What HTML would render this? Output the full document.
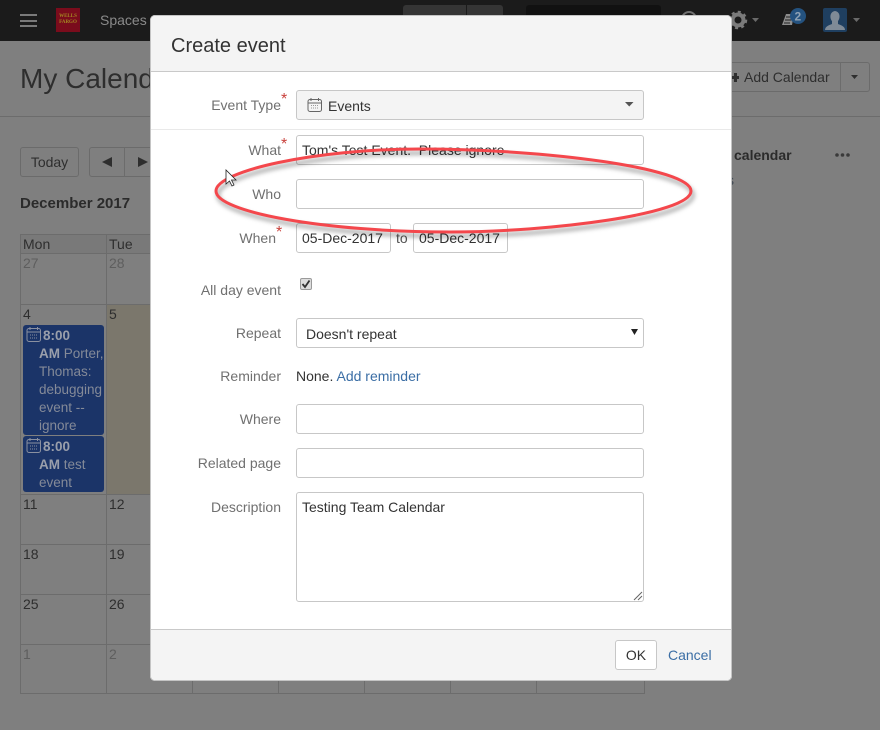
<!DOCTYPE html>
<html><head><meta charset="utf-8"><style>
html,body{margin:0;padding:0}
body{width:880px;height:730px;overflow:hidden;position:relative;background:#7f7f7f;font-family:"Liberation Sans",sans-serif;font-size:14px;color:#333}
.a{position:absolute;white-space:nowrap}
.nav{left:0;top:0;width:880px;height:41px;background:#1b1b1b}
.bar{left:20px;width:17px;height:2px;background:#7a7a7a}
.btn{border:1px solid #6b6b6b;border-radius:3px;box-sizing:border-box}
.l{background:#6c6c6c}
.n{font-size:14px;color:#2e2e2e;line-height:16px}
.g{color:#5e5e5e}
.ev{left:23px;width:81px;background:#1b3468;border-radius:3px;color:#848a98;font-size:13.500px;line-height:18px}
.ev b{color:#9a9fab}
.modal{left:150px;top:15px;width:582px;height:666px;background:#fff;border-radius:5px;box-shadow:0 0 0 1px #c4c4c4 inset}
.lab{right:599px;color:#707070;font-size:14px;line-height:16px}
.lab i{position:absolute;left:100%;top:-5px;font-style:normal;font-size:16px;color:#c9413c}
.in{left:296px;width:348px;height:30px;border:1px solid #c7c7c7;border-radius:3px;box-sizing:border-box;background:#fff;color:#333;padding:6px 5px 0;line-height:16px}
</style></head><body>
<div class="a nav"></div>
<div class="a bar" style="top:14px"></div><div class="a bar" style="top:20px"></div><div class="a bar" style="top:25px"></div>
<div class="a" style="left:56px;top:8px;width:24px;height:24px;background:#7a0c1c;color:#a58a22;font:bold 5px/6px 'Liberation Serif',serif;text-align:center;padding-top:6px;box-sizing:border-box">WELLS<br>FARGO</div>
<div class="a" style="left:100px;top:12px;color:#8a8a8a;font-size:14px;line-height:16px">Spaces</div>
<div class="a" style="left:403px;top:5px;width:100px;height:36px;background:#353535;border-radius:3px 3px 0 0"></div>
<div class="a" style="left:466px;top:5px;width:1px;height:36px;background:#1b1b1b"></div>
<div class="a" style="left:526px;top:5px;width:135px;height:36px;background:#111;border-radius:3px 3px 0 0"></div>
<svg class="a" style="left:670px;top:0" width="210" height="41">
<circle cx="19" cy="19" r="7" fill="none" stroke="#707070" stroke-width="2"/>
<circle cx="68" cy="20" r="5.500" fill="none" stroke="#7a7a7a" stroke-width="4"/>
<circle cx="68" cy="20" r="8" fill="none" stroke="#7a7a7a" stroke-width="2.500" stroke-dasharray="3 3.200"/>
<path d="M82 18h7l-3.500 4z" fill="#6a6a6a"/>
<path d="M112 25l4-11h8l-2 11z" fill="#8c8c8c"/>
<path d="M116 17h6M115 20h6M114 23h6" stroke="#222" stroke-width="1"/>
<circle cx="128" cy="16" r="8" fill="#24527f"/>
<rect x="153" y="8" width="24" height="24" rx="2" fill="#1f3f60"/>
<path d="M155 30c0-4 5-5 7-6v-3c-2-2-3-9 3-10 6 1 5 8 3 10v3c2 1 7 2 7 6z" fill="#7f8a96"/>
<path d="M183 18h7l-3.500 4z" fill="#6a6a6a"/>
<text x="124.500" y="20.500" font-family="Liberation Sans" font-size="12" font-weight="bold" fill="#8fa3b5">2</text>
</svg>
<div class="a" style="left:20px;top:62px;font-size:28px;line-height:34px;color:#2e2e2e">My Calendar</div>
<div class="a l" style="left:0;top:116px;width:880px;height:1px"></div>
<div class="a btn" style="left:725px;top:62px;width:145px;height:30px"></div>
<div class="a l" style="left:840px;top:62px;width:1px;height:30px"></div>
<div class="a" style="left:744px;top:69px;color:#2e2e2e;line-height:16px">Add Calendar</div>
<div class="a" style="left:732px;top:76px;width:7px;height:3px;background:#2e2e2e"></div>
<div class="a" style="left:734px;top:73px;width:3px;height:9px;background:#2e2e2e"></div>
<svg class="a" style="left:850px;top:74px" width="10" height="6"><path d="M1 1h7l-3.500 4z" fill="#2e2e2e"/></svg>
<div class="a" style="left:734px;top:147px;font-weight:bold;color:#2b2b2b;line-height:16px">calendar</div>
<div class="a" style="left:727px;top:172px;color:#3d4650;line-height:16px">s</div>
<svg class="a" style="left:834px;top:151px" width="18" height="8"><circle cx="3" cy="4" r="1.800" fill="#3a3a3a"/><circle cx="8.500" cy="4" r="1.800" fill="#3a3a3a"/><circle cx="14" cy="4" r="1.800" fill="#3a3a3a"/></svg>
<div class="a btn" style="left:20px;top:147px;width:59px;height:30px;line-height:28px;text-align:center;color:#2e2e2e">Today</div>
<div class="a btn" style="left:89px;top:147px;width:70px;height:30px"></div>
<div class="a l" style="left:124px;top:147px;width:1px;height:30px"></div>
<svg class="a" style="left:100px;top:155px" width="50" height="14"><path d="M12 2v10l-10-5z" fill="#2e2e2e"/><path d="M38 2v10l10-5z" fill="#2e2e2e"/></svg>
<div class="a" style="left:20px;top:196px;font-weight:bold;font-size:15px;color:#2b2b2b;line-height:16px">December 2017</div>
<div class="a" style="left:20px;top:234px;width:625px;height:19px;background:#797979"></div>
<div class="a" style="left:107px;top:305px;width:85px;height:190px;background:#7b776c"></div>
<div class="a l" style="left:20px;top:234px;width:625px;height:1px"></div>
<div class="a l" style="left:20px;top:253px;width:625px;height:1px"></div>
<div class="a l" style="left:20px;top:304px;width:625px;height:1px"></div>
<div class="a l" style="left:20px;top:494px;width:625px;height:1px"></div>
<div class="a l" style="left:20px;top:544px;width:625px;height:1px"></div>
<div class="a l" style="left:20px;top:594px;width:625px;height:1px"></div>
<div class="a l" style="left:20px;top:644px;width:625px;height:1px"></div>
<div class="a l" style="left:20px;top:693px;width:625px;height:1px"></div>
<div class="a l" style="left:20px;top:234px;width:1px;height:460px"></div>
<div class="a l" style="left:106px;top:234px;width:1px;height:460px"></div>
<div class="a l" style="left:192px;top:234px;width:1px;height:460px"></div>
<div class="a l" style="left:278px;top:234px;width:1px;height:460px"></div>
<div class="a l" style="left:364px;top:234px;width:1px;height:460px"></div>
<div class="a l" style="left:450px;top:234px;width:1px;height:460px"></div>
<div class="a l" style="left:536px;top:234px;width:1px;height:460px"></div>
<div class="a l" style="left:644px;top:234px;width:1px;height:460px"></div>
<div class="a n" style="left:23px;top:236px">Mon</div><div class="a n" style="left:109px;top:236px">Tue</div>
<div class="a n g" style="left:23px;top:255px">27</div><div class="a n g" style="left:109px;top:255px">28</div>
<div class="a n" style="left:23px;top:306px">4</div><div class="a n" style="left:109px;top:306px">5</div>
<div class="a n" style="left:23px;top:496px">11</div><div class="a n" style="left:109px;top:496px">12</div>
<div class="a n" style="left:23px;top:546px">18</div><div class="a n" style="left:109px;top:546px">19</div>
<div class="a n" style="left:23px;top:596px">25</div><div class="a n" style="left:109px;top:596px">26</div>
<div class="a n g" style="left:23px;top:646px">1</div><div class="a n g" style="left:109px;top:646px">2</div>
<div class="a ev" style="top:325px;height:110px"></div>
<div class="a ev" style="top:436px;height:56px"></div>
<svg class="a" style="left:26px;top:326px" width="16" height="17"><rect x="1" y="2.500" width="13.500" height="13" rx="2" fill="none" stroke="#8a90a0"/><path d="M1 6h13.500M4 1v3M11.500 1v3" stroke="#8a90a0"/><path d="M4 9h8M4 12h8" stroke="#8a90a0" stroke-dasharray="1 1"/></svg>
<svg class="a" style="left:26px;top:437px" width="16" height="17"><rect x="1" y="2.500" width="13.500" height="13" rx="2" fill="none" stroke="#8a90a0"/><path d="M1 6h13.500M4 1v3M11.500 1v3" stroke="#8a90a0"/><path d="M4 9h8M4 12h8" stroke="#8a90a0" stroke-dasharray="1 1"/></svg>
<div class="a ev" style="left:43px;top:327px;width:auto;background:none"><b>8:00</b></div>
<div class="a ev" style="left:39px;top:345px;width:auto;background:none"><b>AM</b> Porter,<br>Thomas:<br>debugging<br>event --<br>ignore</div>
<div class="a ev" style="left:43px;top:438px;width:auto;background:none"><b>8:00</b></div>
<div class="a ev" style="left:39px;top:456px;width:auto;background:none"><b>AM</b> test<br>event</div>

<div class="a modal"></div>
<div class="a" style="left:151px;top:16px;width:580px;height:55px;background:#f4f4f4;border-bottom:1px solid #c9c9c9;border-radius:4px 4px 0 0"></div>
<div class="a" style="left:171px;top:34px;font-size:20px;line-height:24px;color:#333">Create event</div>
<div class="a" style="left:151px;top:129px;width:580px;height:1px;background:#e9e9e9"></div>
<div class="a" style="left:151px;top:629px;width:580px;height:51px;background:#f4f4f4;border-top:1px solid #c9c9c9;box-sizing:border-box;border-radius:0 0 4px 4px"></div>
<div class="a lab" style="top:97px">Event Type<i>*</i></div>
<div class="a lab" style="top:142px">What<i>*</i></div>
<div class="a lab" style="top:186px">Who</div>
<div class="a lab" style="top:230px;right:604px">When<i>*</i></div>
<div class="a lab" style="top:282px">All day event</div>
<div class="a lab" style="top:325px">Repeat</div>
<div class="a lab" style="top:368px">Reminder</div>
<div class="a lab" style="top:411px">Where</div>
<div class="a lab" style="top:455px">Related page</div>
<div class="a lab" style="top:499px">Description</div>
<div class="a in" style="top:90px;background:#f4f4f4;padding-left:31px;padding-top:7px">Events</div>
<svg class="a" style="left:307px;top:97px" width="16" height="16"><rect x="1" y="2.500" width="13.500" height="12" rx="2" fill="none" stroke="#666"/><path d="M1 6h13.500M4 1v3M11.500 1v3" stroke="#666"/><path d="M4 8.500h8M4 11h8" stroke="#999" stroke-dasharray="1 1"/></svg>
<svg class="a" style="left:625px;top:102px" width="10" height="6"><path d="M0 0h8.500l-4.250 4.500z" fill="#555"/></svg>
<div class="a in" style="top:135px">Tom's Test Event.&nbsp; Please ignore</div>
<div class="a in" style="top:179px"></div>
<div class="a in" style="top:223px;width:95px">05-Dec-2017</div>
<div class="a" style="left:396px;top:230px;line-height:16px;color:#555">to</div>
<div class="a in" style="top:223px;left:413px;width:95px">05-Dec-2017</div>
<div class="a" style="left:300px;top:278px;width:12px;height:12px;box-sizing:border-box;border:1px solid #9a9a9a;border-radius:2px;background:#ddd"></div>
<svg class="a" style="left:300px;top:278px" width="12" height="12"><path d="M2.500 6l2.500 3 4.500-6.500" fill="none" stroke="#333" stroke-width="1.800"/></svg>
<div class="a in" style="top:318px;padding-left:9px;padding-top:7px">Doesn't repeat</div>
<svg class="a" style="left:631px;top:329px" width="8" height="7"><path d="M0 0h7l-3.500 6z" fill="#222"/></svg>
<div class="a" style="left:296px;top:368px;line-height:16px;color:#333">None. <span style="color:#3b6ea5">Add reminder</span></div>
<div class="a in" style="top:404px"></div>
<div class="a in" style="top:448px"></div>
<div class="a in" style="top:492px;height:110px">Testing Team Calendar</div>
<svg class="a" style="left:633px;top:591px" width="10" height="10"><path d="M1 9l8-8M5 9l4-4" stroke="#666"/></svg>
<div class="a" style="left:615px;top:640px;width:42px;height:30px;box-sizing:border-box;border:1px solid #c7c7c7;border-radius:3px;background:#fff;text-align:center;line-height:28px;color:#333">OK</div>
<div class="a" style="left:668px;top:647px;line-height:16px;color:#3b6ea5">Cancel</div>
<svg class="a" style="left:205px;top:140px" width="500" height="105">
<path d="M11 51C11 31 110 9 215 9C340 9 486 28 486 51C486 74 345 92 245 92C120 92 11 72 11 51Z" fill="none" stroke="#000" stroke-opacity=".3" stroke-width="4" transform="translate(2 4)" style="filter:blur(2px)"/>
<path d="M11 51C11 31 110 9 215 9C340 9 486 28 486 51C486 74 345 92 245 92C120 92 11 72 11 51Z" fill="none" stroke="#f4474c" stroke-width="3"/>
</svg>
<svg class="a" style="left:225px;top:169px" width="14" height="20"><path d="M1 1v14l3.500-3 2.500 5 2-1-2.500-5h4.500z" fill="#fff" stroke="#222" stroke-width=".8"/></svg>
</body></html>
